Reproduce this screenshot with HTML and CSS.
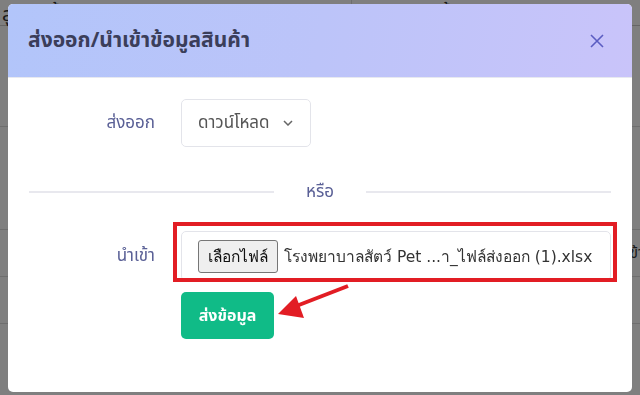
FILE: index.html
```html
<!DOCTYPE html>
<html>
<head>
	<meta charset="utf-8">
	<meta name="viewport" content="width=device-width">
	<title>ส่งออก/นำเข้าข้อมูลสินค้า</title>
	<link rel="stylesheet" href="styles.css">
</head>
<body>
	<div class="page">
		<div class="toolbar">
			<div class="filter wide">ลูกค้าทั้งหมด <span class="caret">&#8964;</span></div>
			<div class="sep"></div>
			<div class="filter">โดยเลือกทั้งหมด</div>
		</div>
		<div class="table">
			<div class="trow first"></div>
			<div class="trow second"></div>
			<div class="trow">
				<span class="cell">นำเข้า</span>
			</div>
			<div class="trow"></div>
		</div>
	</div>

	<div class="overlay">
		<div class="modal">
			<div class="modal-header">
				<h2 class="modal-title">ส่งออก/นำเข้าข้อมูลสินค้า</h2>
				<button class="close" aria-label="close">
					<svg width="14" height="14" viewBox="0 0 14 14">
						<path d="M1 1 L13 13 M13 1 L1 13" stroke="currentColor" stroke-width="1.6" fill="none"/>
					</svg>
				</button>
			</div>
			<div class="modal-body">
				<div class="form-row">
					<label class="form-label">ส่งออก</label>
					<div class="select">
						<span>ดาวน์โหลด</span>
						<svg width="10" height="6" viewBox="0 0 10 6">
							<path d="M1 1 L5 5 L9 1" stroke="currentColor" stroke-width="1.5" fill="none"/>
						</svg>
					</div>
				</div>
				<div class="divider"><span>หรือ</span></div>
				<div class="form-row import">
					<label class="form-label">นำเข้า</label>
					<div class="file-box">
						<span class="file-btn">เลือกไฟล์</span>
						<span class="file-name">โรงพยาบาลสัตว์ Pet ...า_ไฟล์ส่งออก (1).xlsx</span>
						<div class="mark"></div>
					</div>
				</div>
				<div class="form-row submit-row">
					<div class="form-label"></div>
					<button class="submit">ส่งข้อมูล</button>
				</div>
				<svg class="arrow" width="80" height="40" viewBox="0 0 80 40">
					<line x1="76" y1="3" x2="14" y2="27" stroke="#e21d24" stroke-width="4"/>
					<polygon points="6,31 24,13 32,35" fill="#e21d24"/>
				</svg>
			</div>
		</div>
	</div>
</body>
</html>
```

FILE: styles.css
```css
* {
	box-sizing: border-box;
}

body {
	margin: 0;
	font-family: "Noto Sans Thai", "Noto Sans", "Liberation Sans", sans-serif;
	background: #fff;
	color: #333;
}

.page {
	height: 395px;
	overflow: hidden;
}
.toolbar {
	display: flex;
	align-items: flex-end;
	height: 26px;
	border-bottom: 1px solid #ccc;
	padding-left: 2px;
}
.filter {
	font-size: 20px;
	line-height: 20px;
	color: #333;
}
.filter.wide {
	width: 322px;
	display: flex;
	justify-content: space-between;
	padding-right: 12px;
	border-right: 1px solid #ddd;
}
.sep {
	width: 28px;
	height: 25px;
	border-right: 1px solid #ddd;
	margin-right: 14px;
}
.trow {
	height: 47px;
	border-bottom: 1px solid #ddd;
	text-align: right;
	font-size: 15px;
	line-height: 47px;
}
.trow.first {
	height: 101px;
}
.trow.second {
	height: 103px;
}
.cell {
	margin-right: -4px;
}

.overlay {
	position: fixed;
	inset: 0;
	background: rgba(0, 0, 0, 0.5);
	padding: 4px 8px 3px;
}
.modal {
	width: 624px;
	height: 388px;
	background: #fff;
	border-radius: 5px;
	overflow: hidden;
	position: relative;
}
.modal-header {
	height: 74px;
	display: flex;
	align-items: center;
	justify-content: space-between;
	padding: 0 28px 0 20px;
	background: linear-gradient(100deg, #b2c5fa 0%, #bcc4f9 50%, #c9c4fa 100%);
	border-bottom: 1px solid #e7e9f0;
}
.modal-title {
	margin: 0;
	font-size: 21px;
	font-weight: 700;
	color: #3b3e5a;
}
.close {
	border: 0;
	background: none;
	padding: 0;
	color: #5b5dc2;
	display: flex;
}

.modal-body {
	padding: 21px 21px;
	position: relative;
}
.form-row {
	display: flex;
	align-items: center;
	gap: 26px;
}
.form-label {
	width: 126px;
	text-align: right;
	color: #5a6096;
	font-size: 17px;
}
.select {
	width: 130px;
	height: 48px;
	border: 1px solid #e3e4ea;
	border-radius: 5px;
	display: flex;
	align-items: center;
	justify-content: space-between;
	padding: 0 17px 0 16px;
	font-size: 17px;
	color: #555;
}
.select svg {
	color: #666;
}

.divider {
	display: flex;
	align-items: center;
	height: 20px;
	line-height: 20px;
	margin: 35px 0 29px;
	gap: 32px;
	color: #5a6096;
	font-size: 17px;
}
.divider::before, .divider::after {
	content: "";
	flex: 1;
	height: 2px;
	background: #e8e8ee;
}

.file-box {
	position: relative;
	width: 430px;
	height: 50px;
	border: 1px solid #e3e4ea;
	border-radius: 5px;
	display: flex;
	align-items: center;
	padding: 0 16px;
	gap: 6px;
	font-family: "DejaVu Sans", sans-serif;
}
.file-btn {
	font-size: 15.5px;
	padding: 3px 9px;
	background: #efefef;
	border: 1px solid #767676;
	border-radius: 3px;
	color: #111;
}
.file-name {
	font-size: 15.5px;
	color: #333;
	white-space: nowrap;
}
.mark {
	position: absolute;
	left: -9px;
	top: -10px;
	width: 444px;
	height: 60px;
	border: 4px solid #e21d24;
}

.submit-row {
	margin-top: 11px;
}
.submit {
	width: 93px;
	height: 47px;
	border: 0;
	border-radius: 5px;
	background: #10bb87;
	color: #fff;
	font-family: inherit;
	font-size: 16px;
	font-weight: 700;
}

.arrow {
	position: absolute;
	left: 264px;
	top: 205px;
}
```
